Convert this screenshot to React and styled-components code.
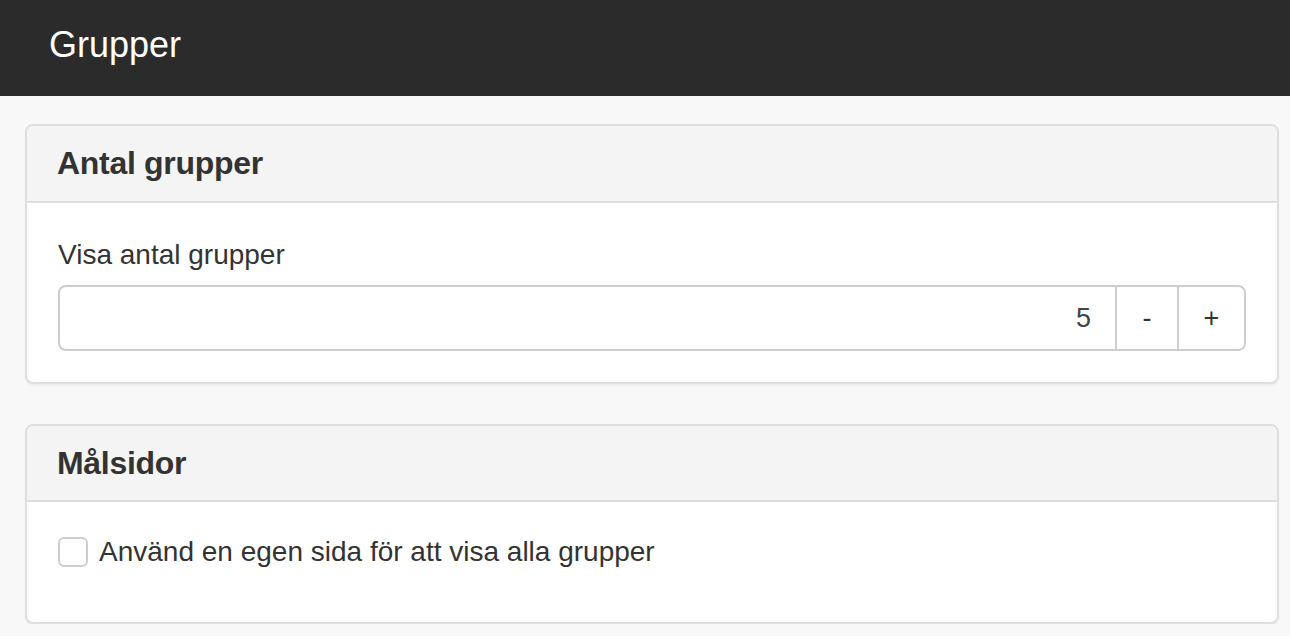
import React from "react";
import styled, { createGlobalStyle } from "styled-components";

const Global = createGlobalStyle`
  html, body { margin: 0; padding: 0; background: #f8f8f8; }
  body { font-family: "Liberation Sans", Arial, sans-serif; color: #333; }
`;

const TopBar = styled.header`
  height: 96px;
  background: #2b2b2b;
  display: flex;
  align-items: center;
  padding-left: 49px;
  box-sizing: border-box;
`;

const TopTitle = styled.h1`
  margin: 0;
  font-size: 36px;
  font-weight: 400;
  color: #fff;
  line-height: 1;
  padding-bottom: 6px;
`;

const Content = styled.main`
  padding: 28px 11px 0 25px;
  display: flex;
  flex-direction: column;
  gap: 40px;
`;

const Card = styled.section`
  background: #fff;
  border: 2px solid #dedede;
  border-radius: 8px;
  box-shadow: 0 2px 2px rgba(0, 0, 0, 0.04);
  overflow: hidden;
`;

const CardHead = styled.div`
  height: ${(p) => p.$h}px;
  background: #f4f4f4;
  border-bottom: 2px solid #dedede;
  display: flex;
  align-items: center;
  padding-left: 30px;
  box-sizing: border-box;
`;

const CardTitle = styled.h2`
  margin: 0;
  font-size: 32px;
  font-weight: 700;
  color: #333;
  letter-spacing: -0.3px;
`;

const CardBody = styled.div`
  padding: ${(p) => p.$pad};
`;

const Label = styled.div`
  font-size: 28px;
  color: #333;
  line-height: 1;
  margin-bottom: 16px;
`;

const Spinner = styled.div`
  display: flex;
  height: 66px;
  border: 2px solid #cdcdcd;
  border-radius: 8px;
  box-sizing: border-box;
  overflow: hidden;
`;

const NumberField = styled.div`
  flex: 1;
  display: flex;
  align-items: center;
  justify-content: flex-end;
  padding-right: 24px;
  font-size: 27px;
  color: #444;
`;

const StepButton = styled.button`
  width: ${(p) => p.$w}px;
  border: none;
  border-left: 2px solid #cdcdcd;
  background: #fff;
  font-family: inherit;
  font-size: 27px;
  color: #333;
  display: flex;
  align-items: center;
  justify-content: center;
  padding: 0;
`;

const CheckRow = styled.label`
  display: flex;
  align-items: center;
  gap: 11px;
  font-size: 28px;
  color: #333;
`;

const Box = styled.span`
  width: 30px;
  height: 30px;
  border: 2px solid #cdcdcd;
  border-radius: 6px;
  box-sizing: border-box;
  background: #fff;
`;

export default function App() {
  return (
    <>
      <Global />
      <TopBar>
        <TopTitle>Grupper</TopTitle>
      </TopBar>
      <Content>
        <Card>
          <CardHead $h={77}>
            <CardTitle>Antal grupper</CardTitle>
          </CardHead>
          <CardBody $pad="38px 31px 31px 31px">
            <Label>Visa antal grupper</Label>
            <Spinner>
              <NumberField>5</NumberField>
              <StepButton $w={62}>-</StepButton>
              <StepButton $w={67}>+</StepButton>
            </Spinner>
          </CardBody>
        </Card>
        <Card>
          <CardHead $h={76}>
            <CardTitle>Målsidor</CardTitle>
          </CardHead>
          <CardBody $pad="34px 31px 54px 31px">
            <CheckRow>
              <Box />
              Använd en egen sida för att visa alla grupper
            </CheckRow>
          </CardBody>
        </Card>
      </Content>
    </>
  );
}
